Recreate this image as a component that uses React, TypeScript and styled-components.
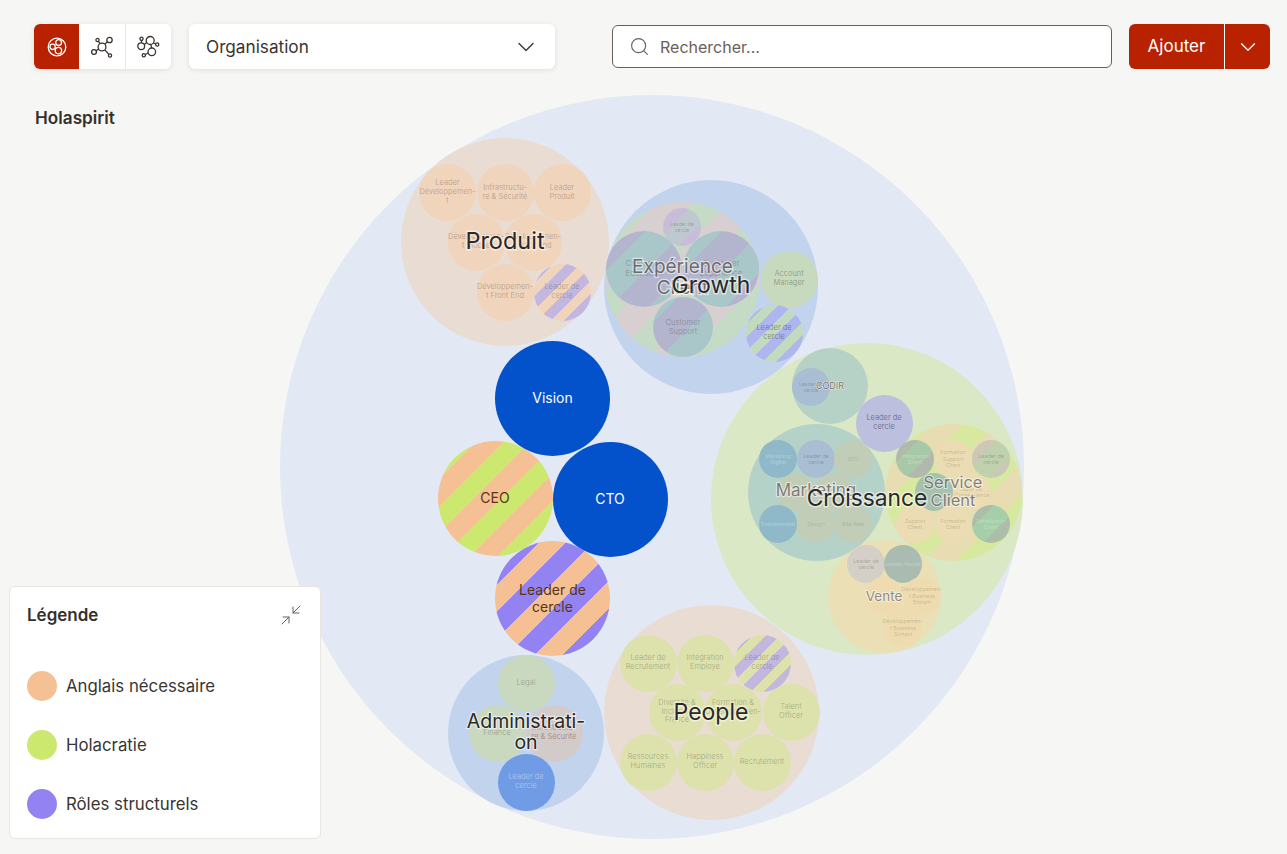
import { Fragment } from "react";
import styled, { createGlobalStyle } from "styled-components";
import { ChevronDown, Minimize2, Search } from "lucide-react";

const GlobalStyle = createGlobalStyle`
  html, body {
    margin: 0;
    padding: 0;
    background: #f6f6f4;
    font-family: "Inter", "Liberation Sans", sans-serif;
    color: #35302c;
  }
  * {
    box-sizing: border-box;
  }
`;

const Page = styled.div`
  position: relative;
  width: 1287px;
  height: 854px;
  overflow: hidden;
  background: #f6f6f4;
`;

const Toolbar = styled.div`
  position: relative;
  z-index: 2;
  display: flex;
  align-items: center;
  padding: 24px 17px 0 34px;
`;

const Switcher = styled.div`
  display: flex;
  height: 45px;
  background: #fff;
  border-radius: 6px;
  overflow: hidden;
  box-shadow: 0 1px 5px rgba(60, 50, 40, 0.12);
`;

const SwitchButton = styled.button<{ $active?: boolean; $divider?: boolean }>`
  width: ${({ $active }) => ($active ? "45px" : "46px")};
  padding: 0;
  display: flex;
  align-items: center;
  justify-content: center;
  border: 0;
  border-left: ${({ $divider }) => ($divider ? "1px solid #e8e6e1" : "0")};
  background: ${({ $active }) => ($active ? "#b82200" : "#fff")};
  color: ${({ $active }) => ($active ? "#fff" : "#3a3531")};
`;

const Dropdown = styled.div`
  width: 366px;
  height: 45px;
  margin-left: 18px;
  padding: 0 15px 0 17px;
  display: flex;
  align-items: center;
  justify-content: space-between;
  background: #fff;
  border-radius: 6px;
  box-shadow: 0 1px 5px rgba(60, 50, 40, 0.12);
  font-size: 17.2px;
  color: #3a3531;
`;

const DropdownText = styled.span`
  padding-bottom: 1px;
`;

const SearchBox = styled.div`
  width: 500px;
  height: 43px;
  margin-left: 57px;
  padding: 0 16px;
  display: flex;
  align-items: center;
  gap: 10px;
  background: #fff;
  border: 1px solid #6b6059;
  border-radius: 6px;
  font-size: 16px;
  color: #6b6059;
`;

const AddGroup = styled.div`
  height: 45px;
  margin-left: 17px;
  display: flex;
  color: #fff;
  background: #b82200;
  border-radius: 6px;
  font-size: 17px;
`;

const AddLabel = styled.div`
  width: 96px;
  padding-bottom: 1px;
  display: flex;
  align-items: center;
  justify-content: center;
  border-right: 1px solid #fff;
`;

const AddCaret = styled.div`
  width: 45px;
  display: flex;
  align-items: center;
  justify-content: center;
`;

const Breadcrumb = styled.div`
  position: relative;
  z-index: 2;
  margin: 39px 0 0 35px;
  font-size: 17.2px;
  line-height: 20px;
  font-weight: 600;
  color: #35302c;
`;

const MapCanvas = styled.div`
  position: absolute;
  inset: 0;
`;

const Bubble = styled.div<{
  $x: number;
  $y: number;
  $r: number;
  $fill?: string;
  $stripes?: [string, string];
  $phase?: number;
  $band?: number;
}>`
  position: absolute;
  left: ${({ $x, $r }) => $x - $r}px;
  top: ${({ $y, $r }) => $y - $r}px;
  width: ${({ $r }) => $r * 2}px;
  height: ${({ $r }) => $r * 2}px;
  border-radius: 50%;
  display: flex;
  align-items: center;
  justify-content: center;
  text-align: center;
  background: ${({ $fill, $stripes, $r, $phase = 0.44, $band }) => {
    if (!$stripes) return $fill;
    const w = $band ?? ($r * 2) / 6;
    const p = w * $phase;
    const [a, b] = $stripes;
    return `repeating-linear-gradient(135deg, ${b} 0 ${p}px, ${a} ${p}px ${p + w}px, ${b} ${p + w}px ${2 * w}px)`;
  }};
`;

const BubbleText = styled.span<{ $size: number; $color: string }>`
  white-space: pre-line;
  font-size: ${({ $size }) => $size}px;
  line-height: 1.2;
  color: ${({ $color }) => $color};
`;

const GroupLabel = styled.div<{ $x: number; $y: number; $size: number; $color: string }>`
  position: absolute;
  left: ${({ $x }) => $x}px;
  top: ${({ $y }) => $y - 1}px;
  transform: translate(-50%, -50%);
  white-space: pre;
  text-align: center;
  font-size: ${({ $size }) => $size}px;
  line-height: 1.1;
  color: ${({ $color }) => $color};
  -webkit-text-stroke: ${({ $size }) => $size * 0.13}px rgba(255, 255, 255, 0.55);
  paint-order: stroke fill;
`;

const Legend = styled.div`
  position: absolute;
  z-index: 2;
  left: 9px;
  top: 586px;
  width: 312px;
  height: 253px;
  padding: 17px 17px 0 17px;
  background: #fff;
  border: 1px solid #e8e6e1;
  border-radius: 6px;
`;

const LegendHeader = styled.div`
  display: flex;
  align-items: center;
  justify-content: space-between;
  height: 22px;
  font-size: 17px;
  font-weight: 600;
  color: #35302c;
`;

const LegendList = styled.div`
  margin-top: 45px;
  display: flex;
  flex-direction: column;
  gap: 29px;
`;

const LegendRow = styled.div`
  display: flex;
  align-items: center;
  gap: 9px;
  font-size: 16.8px;
  color: #3a3531;
`;

const Dot = styled.span<{ $color: string }>`
  width: 30px;
  height: 30px;
  border-radius: 50%;
  background: ${({ $color }) => $color};
`;

type Node = {
  x: number;
  y: number;
  r: number;
  fill?: string;
  stripes?: [string, string];
  phase?: number;
  band?: number;
  text?: string;
  size?: number;
  color?: string;
  label?: { text: string; size: number; color: string; dy?: number };
  children?: Node[];
};

const ORANGE = "#f5c194";
const GREEN = "#cde86f";
const PURPLE = "#9282f2";
const BLUE = "#0352cc";
const INK = "#2c2826";
const FADED = "rgba(60, 50, 40, 0.3)";
const PALE = "rgba(255, 255, 255, 0.3)";
const WARM = "rgba(90, 70, 30, 0.26)";

const leaf = (x: number, y: number, fill: string, text: string, extra: Partial<Node> = {}): Node => ({
  x,
  y,
  r: 28.5,
  fill,
  text,
  size: 7.4,
  color: FADED,
  ...extra,
});

const tiny = (x: number, y: number, fill: string, text: string, extra: Partial<Node> = {}): Node => ({
  x,
  y,
  r: 19,
  fill,
  text,
  size: 5.4,
  color: FADED,
  ...extra,
});

const PRODUCT = "#f0d4bb";
const PEOPLE = "#dde2ac";
const TEAL = "#a9c6c8";
const MAUVE = "#b3b5cf";
const SOFT_ORANGE = "#ebdcb3";

const tree: Node = {
  x: 652,
  y: 467,
  r: 372,
  fill: "#e2e9f4",
  children: [
    {
      x: 505,
      y: 242,
      r: 104,
      fill: "#e9dcd3",
      label: { text: "Produit", size: 23.5, color: INK },
      children: [
        leaf(447.5, 192.5, PRODUCT, "Leader\nDéveloppemen-\nt"),
        leaf(505, 192.5, PRODUCT, "Infrastructu-\nre & Sécurité"),
        leaf(562, 192.5, PRODUCT, "Leader\nProduit"),
        leaf(476, 242, PRODUCT, "Développemen-\nt Mobile"),
        leaf(533, 242, PRODUCT, "Développemen-\nt Back End"),
        leaf(505, 292, PRODUCT, "Développemen-\nt Front End"),
        leaf(562, 292, PRODUCT, "Leader de\ncercle", { stripes: ["#c4b7df", PRODUCT] }),
      ],
    },
    {
      x: 711,
      y: 286.5,
      r: 107,
      fill: "#c2d3ee",
      label: { text: "Growth", size: 23, color: INK },
      children: [
        {
          x: 682.5,
          y: 279,
          r: 77.5,
          stripes: ["#c6dbc6", "#d8cfd0"],
          label: { text: "Expérience\nClient", size: 19, color: "rgba(55, 50, 45, 0.68)" },
          children: [
            tiny(682, 227, "", "Leader de\ncercle", { stripes: ["#bfc8ce", "#c8bcd8"], band: 19, phase: 1, size: 5 }),
            tiny(644, 269, "", "Customer\nEducation", { r: 38, stripes: [TEAL, MAUVE], band: 28, phase: 1, size: 8 }),
            tiny(721, 269, "", "Customer\nExperience", { r: 38, stripes: [MAUVE, TEAL], band: 28, phase: 1, size: 8 }),
            tiny(683, 327, "", "Customer\nSupport", { r: 30, stripes: [MAUVE, TEAL], band: 30, phase: 0.6, size: 7.6 }),
          ],
        },
        leaf(789, 279, "#c7dabd", "Account\nManager", { color: "rgba(60, 50, 40, 0.38)" }),
        leaf(774, 333, "", "Leader de\ncercle", { stripes: ["#afb5ee", "#c2dabf"], color: "rgba(60, 50, 40, 0.46)" }),
      ],
    },
    {
      x: 867,
      y: 499,
      r: 156,
      fill: "#dbe8c5",
      label: { text: "Croissance", size: 22.8, color: INK },
      children: [
        {
          x: 830,
          y: 386,
          r: 38,
          fill: "#b6d2c6",
          children: [tiny(811, 386.5, "#a9bdd3", "Leader de\ncercle", { size: 5 })],
          label: { text: "CODIR", size: 9, color: "rgba(55, 50, 45, 0.65)", dy: 1 },
        },
        leaf(884, 423, "#bcc0de", "Leader de\ncercle", { color: "rgba(50, 45, 90, 0.55)" }),
        {
          x: 816,
          y: 492,
          r: 68.5,
          fill: "#b5d2c8",
          label: { text: "Marketing", size: 17, color: "rgba(55, 50, 45, 0.6)", dy: -1 },
          children: [
            tiny(778, 459, "#8fb9c9", "Marketing\nDigital", { color: PALE }),
            tiny(816, 459, "#a9bdd3", "Leader de\ncercle"),
            tiny(853, 459, "#c2cdb7", "SEO", { color: "rgba(60, 50, 40, 0.18)" }),
            tiny(797, 492, "#c2cdb7", ""),
            tiny(834, 492, "#c2cdb7", ""),
            tiny(778, 524, "#8fb9c9", "Evénementiel", { color: PALE }),
            tiny(816, 524, "#c2cdb7", "Design", { color: "rgba(60, 50, 40, 0.18)" }),
            tiny(853, 524, "#c2cdb7", "Site Web", { color: "rgba(60, 50, 40, 0.22)" }),
          ],
        },
        {
          x: 953,
          y: 492,
          r: 68.5,
          stripes: ["#d7e89f", "#e7dcb2"],
          label: { text: "Service\nClient", size: 16.5, color: "rgba(55, 50, 45, 0.6)" },
          children: [
            tiny(915, 459, "", "Intégration\nClient", { stripes: ["#a8c9a8", "#b0b9ac"], band: 18, phase: 0.9, color: PALE }),
            tiny(953, 459, SOFT_ORANGE, "Formation\nSupport\nClient", { color: WARM }),
            tiny(991, 459, "", "Leader de\ncercle", { stripes: ["#bfd2ad", "#cbc8b8"], band: 19, phase: 1 }),
            tiny(934, 492, "#a6c2ae", ""),
            tiny(972, 492, SOFT_ORANGE, "Suivi de\nConséquence", { color: WARM }),
            tiny(915, 524, SOFT_ORANGE, "Support\nClient", { color: WARM }),
            tiny(953, 524, SOFT_ORANGE, "Formation\nClient", { color: WARM }),
            tiny(991, 524, "", "Satisfaction\nClient", { stripes: ["#a5cfa8", "#acbdaa"], band: 18, phase: 0.9, color: PALE }),
          ],
        },
        {
          x: 884,
          y: 596,
          r: 56.5,
          fill: "#ebdfb6",
          label: { text: "Vente", size: 13.5, color: "rgba(55, 50, 45, 0.55)", dy: 1 },
          children: [
            tiny(866, 564, "#d4cfc7", "Leader de\ncercle"),
            tiny(903, 564, "#aabcb2", "Leader l'école", { color: PALE }),
            tiny(884, 596, "#eedcb0", ""),
            tiny(922, 596, "#eedcb0", "Développemen-\nt Business\nEntrant", { color: WARM }),
            tiny(903, 628, "#eedcb0", "Développemen-\nt Business\nSortant", { color: WARM }),
          ],
        },
      ],
    },
    {
      x: 711,
      y: 712,
      r: 107.5,
      fill: "#e9dcd3",
      label: { text: "People", size: 23, color: INK, dy: 1.5 },
      children: [
        leaf(648, 663, PEOPLE, "Leader de\nRecrutement"),
        leaf(705, 663, PEOPLE, "Intégration\nEmployé"),
        leaf(762, 663, PEOPLE, "Leader de\ncercle", { stripes: ["#c4b7df", PEOPLE] }),
        leaf(677, 712, PEOPLE, "Diversité &\nInclusion\nFrance"),
        leaf(733, 712, PEOPLE, "Formation &\nDéveloppemen-\nt"),
        leaf(791, 712, PEOPLE, "Talent\nOfficer"),
        leaf(648, 762, PEOPLE, "Ressources\nHumaines"),
        leaf(705, 762, PEOPLE, "Happiness\nOfficer"),
        leaf(762, 762, PEOPLE, "Recrutement"),
      ],
    },
    {
      x: 526,
      y: 733,
      r: 78,
      fill: "#c2d3ee",
      label: { text: "Administrati-\non", size: 19.5, color: INK },
      children: [
        leaf(526, 683, "#c8d9bf", "Legal"),
        leaf(497, 733, "#c8d9bf", "Finance"),
        leaf(554, 733, "#d2cbca", "Infrastructu-\nre & Sécurité", { color: "rgba(90, 50, 40, 0.42)" }),
        leaf(526, 782, "#6f9ce4", "Leader de\ncercle", { color: "rgba(255, 255, 255, 0.38)" }),
      ],
    },
    {
      x: 552.5,
      y: 398.5,
      r: 57.5,
      fill: BLUE,
      text: "Vision",
      size: 14,
      color: "#fff",
    },
    {
      x: 495,
      y: 498.5,
      r: 57.5,
      stripes: [GREEN, ORANGE],
      text: "CEO",
      size: 14,
      color: "#5a3412",
    },
    {
      x: 610,
      y: 499,
      r: 57.5,
      fill: BLUE,
      text: "CTO",
      size: 14,
      color: "#fff",
    },
    {
      x: 552.5,
      y: 598.5,
      r: 57.5,
      stripes: [PURPLE, ORANGE],
      phase: 0.68,
      text: "Leader de\ncercle",
      size: 14,
      color: "#5a3412",
    },
  ],
};

const renderNode = (node: Node, key: string) => (
  <Fragment key={key}>
    <Bubble
      $x={node.x}
      $y={node.y}
      $r={node.r}
      $fill={node.fill}
      $stripes={node.stripes}
      $phase={node.phase}
      $band={node.band}
    >
      {node.text && (
        <BubbleText $size={node.size ?? 8} $color={node.color ?? FADED}>
          {node.text}
        </BubbleText>
      )}
    </Bubble>
    {node.children?.map((child, i) => renderNode(child, `${key}-${i}`))}
    {node.label && (
      <GroupLabel
        $x={node.x}
        $y={node.y + (node.label.dy ?? 0)}
        $size={node.label.size}
        $color={node.label.color}
      >
        {node.label.text}
      </GroupLabel>
    )}
  </Fragment>
);

const CirclesIcon = () => (
  <svg width="22" height="22" viewBox="0 0 22 22" fill="none" stroke="currentColor" strokeWidth="1.3">
    <circle cx="11" cy="11" r="8.8" />
    <circle cx="12.6" cy="6.6" r="2.9" />
    <circle cx="6.6" cy="10.8" r="2.7" />
    <circle cx="12.4" cy="14.6" r="3.2" />
  </svg>
);

const NetworkIcon = () => (
  <svg width="24" height="24" viewBox="0 0 24 24" fill="none" stroke="currentColor" strokeWidth="1.3">
    <circle cx="12" cy="12" r="3.9" />
    <circle cx="19.5" cy="5" r="2.7" />
    <circle cx="7.5" cy="5" r="1.6" />
    <circle cx="4" cy="17" r="2.4" />
    <circle cx="20" cy="20.5" r="1.6" />
    <path d="M14.9 9.3 17.6 6.8M10 8.7 8.4 6.4M8.8 14.1 6 15.7M14.7 14.9 18.9 19.3" />
  </svg>
);

const ClusterIcon = () => (
  <svg width="24" height="24" viewBox="0 0 24 24" fill="none" stroke="currentColor" strokeWidth="1.3">
    <circle cx="4.5" cy="3.8" r="1.6" />
    <circle cx="4.2" cy="11.2" r="3.4" />
    <circle cx="13.2" cy="5.5" r="4" />
    <circle cx="20.2" cy="9.5" r="1.6" />
    <circle cx="14.8" cy="16.8" r="3.8" />
    <circle cx="6.8" cy="20.2" r="1.6" />
    <path d="M4.5 5.4V7.8M7.4 9.5 9.6 7.5M16.5 8.2 18.7 9M14 9.5 14.5 13M8.3 19.5 11.4 18" />
  </svg>
);

const App = () => (
  <Page>
    <GlobalStyle />
    <MapCanvas>{renderNode(tree, "root")}</MapCanvas>
    <Toolbar>
      <Switcher>
        <SwitchButton $active>
          <CirclesIcon />
        </SwitchButton>
        <SwitchButton>
          <NetworkIcon />
        </SwitchButton>
        <SwitchButton $divider>
          <ClusterIcon />
        </SwitchButton>
      </Switcher>
      <Dropdown>
        <DropdownText>Organisation</DropdownText>
        <ChevronDown size={28} strokeWidth={1.2} />
      </Dropdown>
      <SearchBox>
        <Search size={21} strokeWidth={1.3} />
        Rechercher...
      </SearchBox>
      <AddGroup>
        <AddLabel>Ajouter</AddLabel>
        <AddCaret>
          <ChevronDown size={26} strokeWidth={1.2} />
        </AddCaret>
      </AddGroup>
    </Toolbar>
    <Breadcrumb>Holaspirit</Breadcrumb>
    <Legend>
      <LegendHeader>
        Légende
        <Minimize2 size={24} strokeWidth={1} color="#6b6059" />
      </LegendHeader>
      <LegendList>
        <LegendRow>
          <Dot $color={ORANGE} />
          Anglais nécessaire
        </LegendRow>
        <LegendRow>
          <Dot $color={GREEN} />
          Holacratie
        </LegendRow>
        <LegendRow>
          <Dot $color={PURPLE} />
          Rôles structurels
        </LegendRow>
      </LegendList>
    </Legend>
  </Page>
);

export default App;
